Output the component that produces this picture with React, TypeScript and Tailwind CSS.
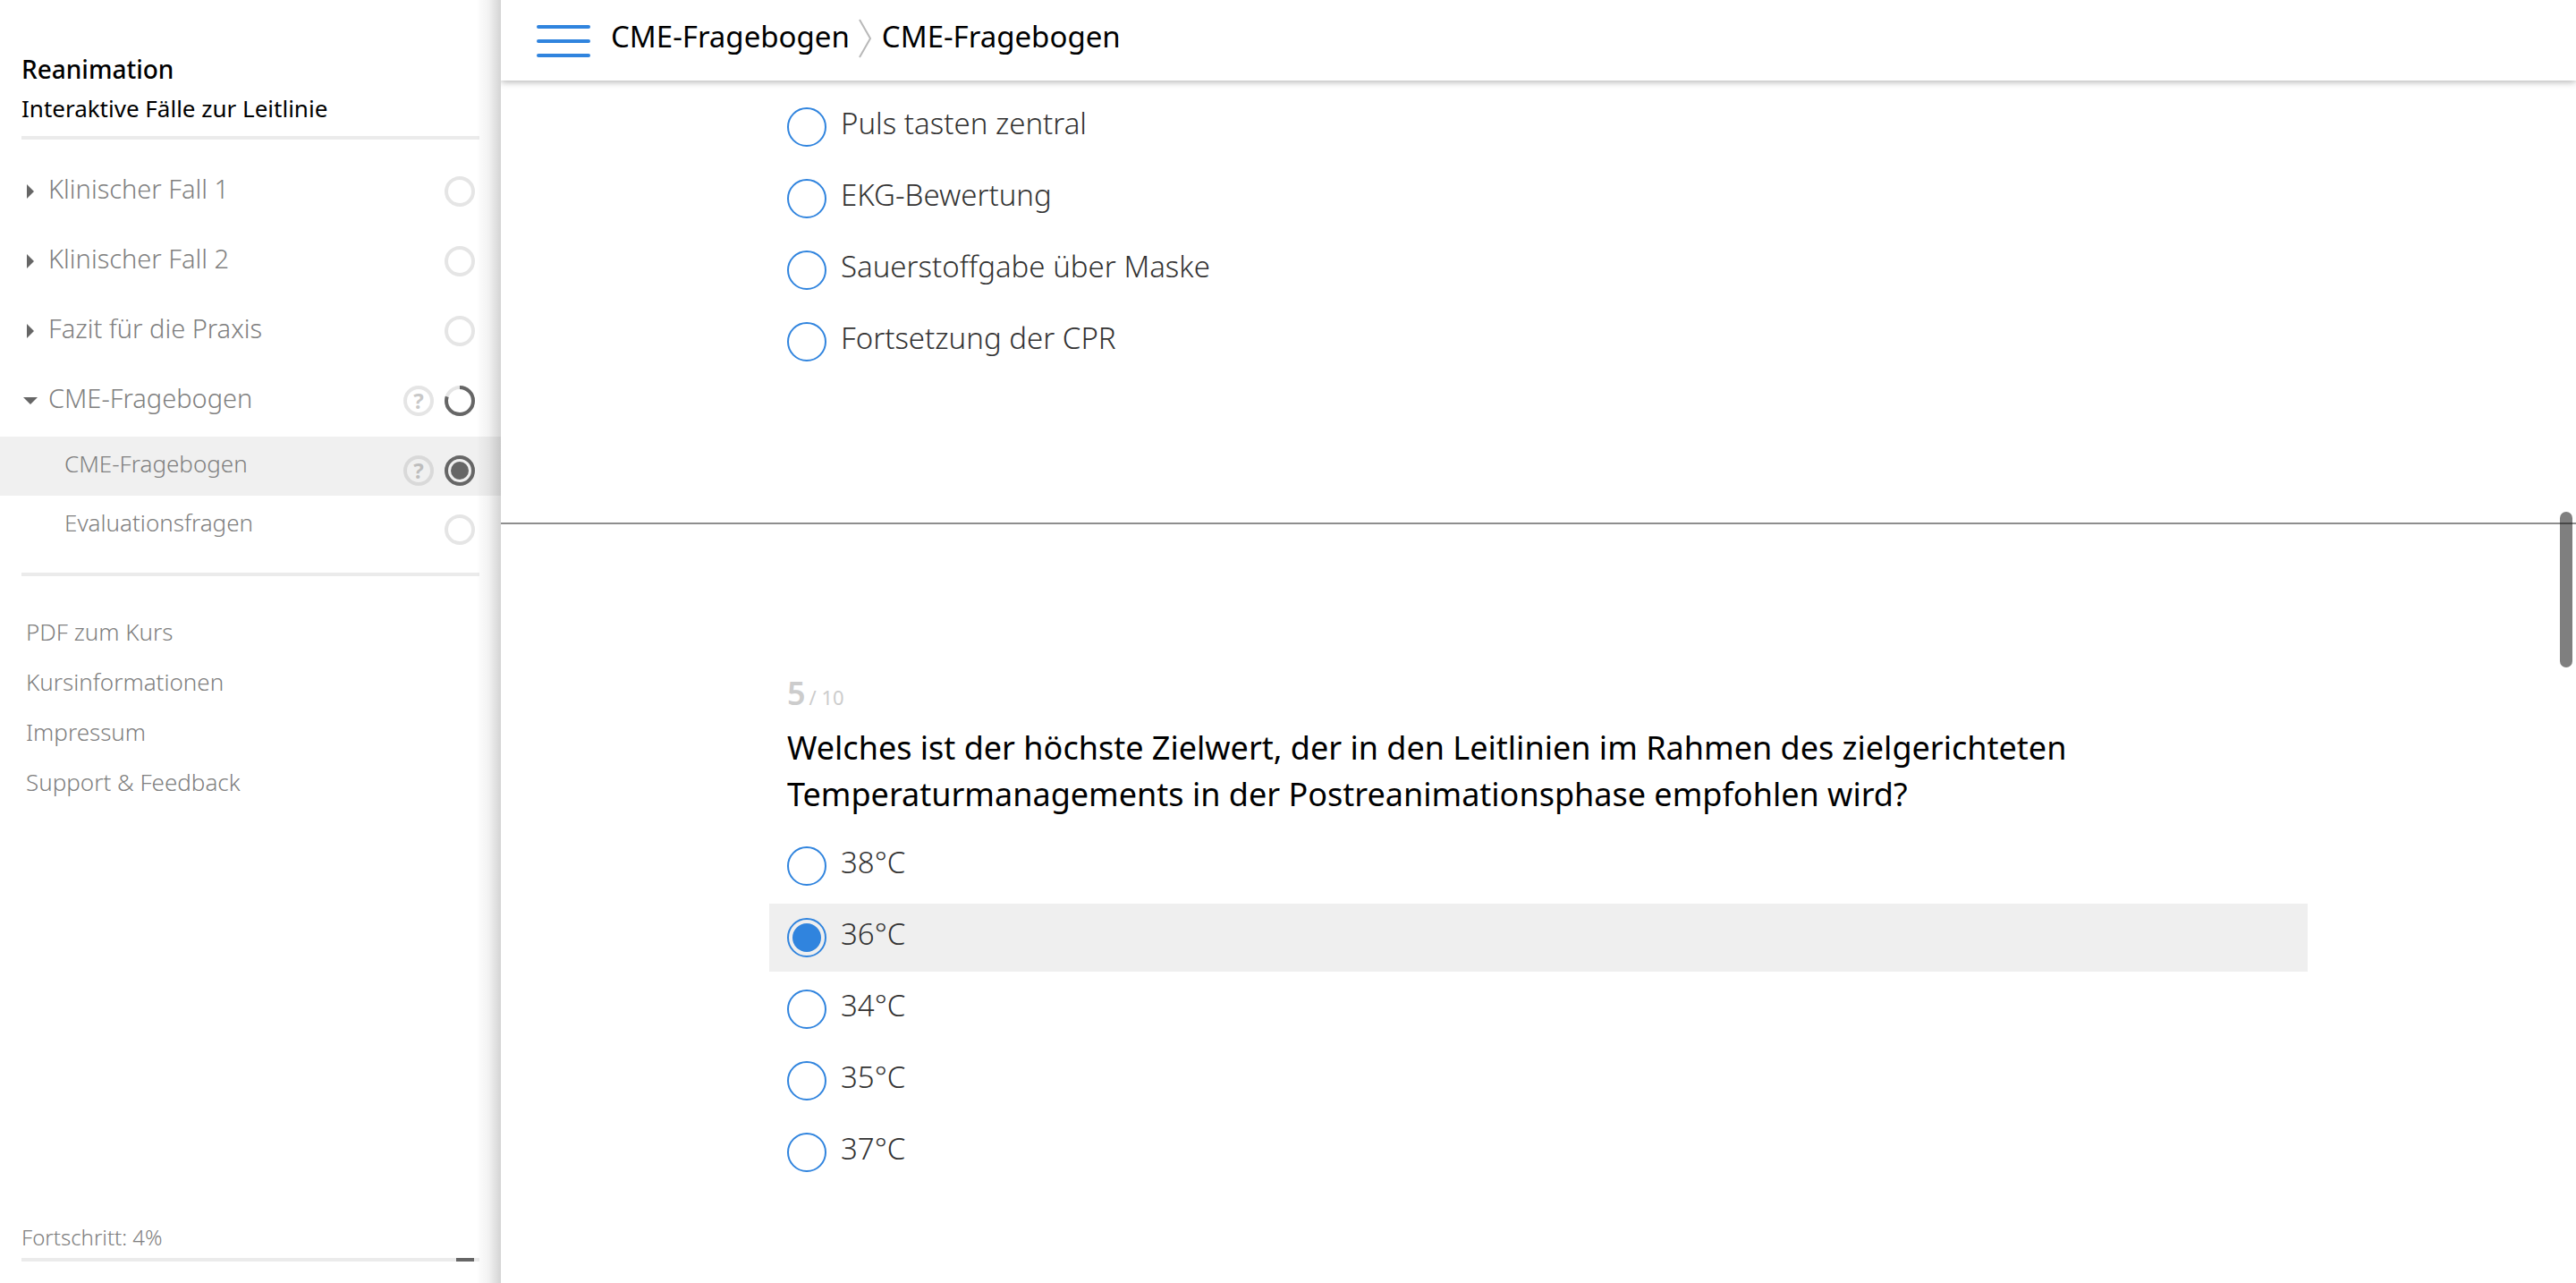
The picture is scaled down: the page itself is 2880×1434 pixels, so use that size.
import { useState } from "react";

type Status = "empty" | "partial" | "current";

function StatusIcon({ status }: { status: Status }) {
  return (
    <svg viewBox="0 0 34 34" className="size-[34px] shrink-0" fill="none" strokeWidth="4" aria-hidden="true">
      <circle cx="17" cy="17" r="15" stroke={status === "current" ? "#666" : "#e5e5e5"} />
      {status === "partial" && (
        <circle cx="17" cy="17" r="15" stroke="#666" pathLength="100" strokeDasharray="80 20" transform="rotate(-90 17 17)" />
      )}
      {status === "current" && <circle cx="17" cy="17" r="10" fill="#666" />}
    </svg>
  );
}

function HelpBadge({ dark = false }: { dark?: boolean }) {
  return (
    <span
      className={
        "flex size-[34px] shrink-0 items-center justify-center rounded-full border-4 text-2xl font-bold " +
        (dark ? "border-[#d9d9d9] text-[#bdbdbd]" : "border-[#e5e5e5] text-[#c8c8c8]")
      }
    >
      ?
    </span>
  );
}

function Chapter({ title, open = false }: { title: string; open?: boolean }) {
  return (
    <button type="button" aria-expanded={open} className="flex h-[78px] w-full items-start pr-[29px] pl-[26px] text-left">
      <svg viewBox="0 0 16 16" className="mt-[31px] size-4 shrink-0" fill="#666" aria-hidden="true">
        {open ? <path d="M0 4h16l-8 8z" /> : <path d="M4 0v16l8-8z" />}
      </svg>
      <span className="ml-3 flex-1 text-[29px] leading-[72px] font-light">{title}</span>
      <span className="mt-[22px] flex gap-3">
        {open && <HelpBadge />}
        <StatusIcon status={open ? "partial" : "empty"} />
      </span>
    </button>
  );
}

function Page({ title, current = false }: { title: string; current?: boolean }) {
  return (
    <a
      href="#"
      aria-current={current ? "page" : undefined}
      className={"flex h-[66px] items-start pr-[29px] pl-[72px] " + (current ? "bg-[#f0f0f0]" : "")}
    >
      <span className="flex-1 text-[26px] leading-[60px] font-light">{title}</span>
      <span className="mt-[21px] flex gap-3">
        {current && <HelpBadge dark />}
        <StatusIcon status={current ? "current" : "empty"} />
      </span>
    </a>
  );
}

function Sidebar() {
  return (
    <aside className="relative z-20 flex w-[560px] shrink-0 flex-col bg-white text-[#808080]">
      <div className="mx-6 border-b-4 border-[#ebebeb] pt-14 pb-2 text-black">
        <h1 className="text-[28px] leading-[42px] font-medium">Reanimation</h1>
        <p className="text-[26px] leading-[46px]">Interaktive Fälle zur Leitlinie</p>
      </div>
      <nav className="pt-[19px]" aria-label="Kapitel">
        <Chapter title="Klinischer Fall 1" />
        <Chapter title="Klinischer Fall 2" />
        <Chapter title="Fazit für die Praxis" />
        <Chapter title="CME-Fragebogen" open />
        <div className="mt-px">
          <Page title="CME-Fragebogen" current />
          <Page title="Evaluationsfragen" />
        </div>
      </nav>
      <hr className="mx-6 mt-5 border-t-4 border-[#ebebeb]" />
      <ul className="mt-[34px] px-[29px] text-[26px] leading-[56px] font-light">
        {["PDF zum Kurs", "Kursinformationen", "Impressum", "Support & Feedback"].map((label) => (
          <li key={label}>
            <a href="#">{label}</a>
          </li>
        ))}
      </ul>
      <div className="mx-6 mt-auto pb-6">
        <p className="text-2xl leading-[46px] font-light">Fortschritt: 4%</p>
        <div className="flex h-1 justify-end bg-[#ebebeb] pr-1.5">
          <div className="w-5 bg-[#666]" />
        </div>
      </div>
      <div className="pointer-events-none absolute inset-y-0 right-0 w-7 bg-linear-to-r from-transparent via-black/5 to-black/17" />
    </aside>
  );
}

function Options({ name, options, initial }: { name: string; options: string[]; initial?: string }) {
  const [value, setValue] = useState(initial);
  return (
    <div className="flex flex-col gap-1">
      {options.map((option) => (
        <label
          key={option}
          className="flex h-[76px] items-start px-5 pt-4 text-[33px] leading-9 font-light text-[#333] has-checked:bg-[#efefef]"
        >
          <input
            type="radio"
            name={name}
            checked={value === option}
            onChange={() => setValue(option)}
            className="mr-4 size-11 shrink-0 appearance-none rounded-full border-2 border-[#3084de] bg-clip-content p-1 checked:bg-[#3084de]"
          />
          {option}
        </label>
      ))}
    </div>
  );
}

export default function App() {
  return (
    <div className="flex min-h-screen bg-white font-['Noto_Sans',sans-serif]">
      <Sidebar />
      <main className="relative min-w-0 flex-1">
        <header className="relative z-10 flex h-[90px] items-start bg-white pl-10 shadow-[0_1px_8px_rgba(0,0,0,0.35)]">
          <button type="button" aria-label="Menü" className="mt-7 flex w-[60px] flex-col gap-3">
            <span className="h-1 rounded-full bg-[#3084de]" />
            <span className="h-1 rounded-full bg-[#3084de]" />
            <span className="h-1 rounded-full bg-[#3084de]" />
          </button>
          <nav aria-label="Brotkrumen" className="ml-[23px] flex items-start text-[33px] leading-[82px]">
            <a href="#">CME-Fragebogen</a>
            <svg viewBox="0 0 14 44" className="mr-3 ml-2.5 mt-[21px] h-11 w-3.5" fill="none" stroke="#b8b8b8" strokeWidth="2" aria-hidden="true">
              <path d="M1 1l12 21L1 43" />
            </svg>
            <a href="#" aria-current="page">CME-Fragebogen</a>
          </nav>
        </header>

        <section className="border-b-2 border-[#8e8e8e] px-[300px] pt-3.5 pb-[164px]">
          <Options name="frage-4" options={["Puls tasten zentral", "EKG-Bewertung", "Sauerstoffgabe über Maske", "Fortsetzung der CPR"]} />
        </section>

        <section className="px-[300px] pt-40 pb-24">
          <div className="px-5">
            <p className="text-4xl leading-[58px] text-[#ccc]">
              <span className="font-semibold">5</span>
              <span className="ml-1 text-[22px] leading-none">/ 10</span>
            </p>
            <h2 className="mt-1.5 mb-4 text-4xl leading-[52px]">
              Welches ist der höchste Zielwert, der in den Leitlinien im Rahmen des zielgerichteten Temperaturmanagements in der
              Postreanimationsphase empfohlen wird?
            </h2>
          </div>
          <Options name="frage-5" options={["38°C", "36°C", "34°C", "35°C", "37°C"]} initial="36°C" />
        </section>

        <div className="absolute top-[572px] right-1 z-10 h-[174px] w-3.5 rounded-full bg-black/50" />
      </main>
    </div>
  );
}
